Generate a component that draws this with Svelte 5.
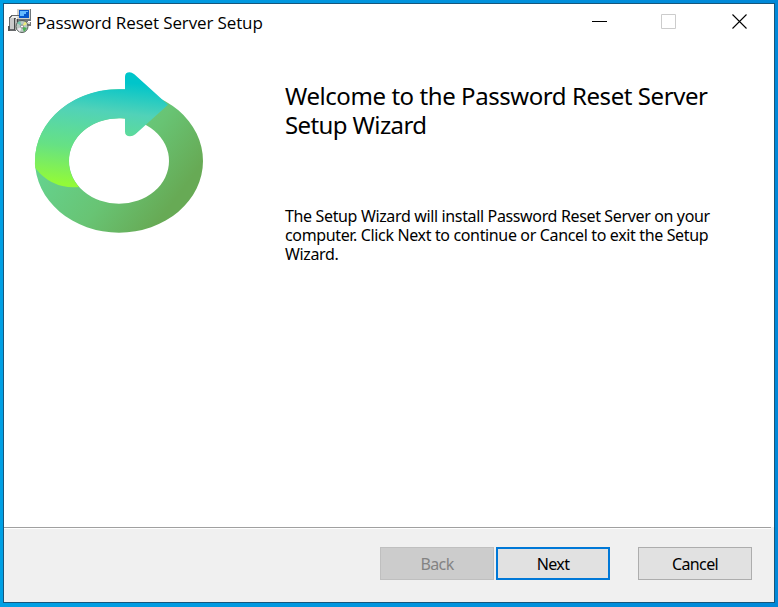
<script>
  let closed = $state(false);
</script>

<div class="desktop">
  <section class="window" aria-label="Password Reset Server Setup">
    <header>
      <svg class="app-icon" width="24" height="25" viewBox="0 0 24 25" shape-rendering="crispEdges">
        <path d="M9 0H23V12H9Z" fill="#6f777c" />
        <path d="M9 0H22V10H9Z" fill="#d5d2c8" />
        <path d="M11 1H21V9H11Z" fill="#0757cd" />
        <path d="M12 2H20V3H18V5H16V7H12Z" fill="#65b9ff" />
        <path d="M13 11H20V13H23V17H12V13H13Z" fill="#747879" />
        <path d="M15 13H22V15H15Z" fill="#d9d9d6" />
        <path d="M1 8L4 6H11L8 9V22H1Z" fill="#66696b" />
        <path d="M2 9H6V20H2Z" fill="#c9caca" />
        <path d="M4 7H10L8 9H2Z" fill="#eeeeea" />
        <path d="M6 9H7V21H6ZM9 10H10V21H9Z" fill="#454849" />
        <path d="M7 10H9V21H7Z" fill="#b2b2b0" />
        <path d="M0 17H2V22H0Z" fill="#555" />
        <g shape-rendering="auto">
          <circle cx="14" cy="17.5" r="6" fill="#bcc9c3" stroke="#555f59" />
          <path d="M14 17.5L9 14L12 12Z" fill="#70c7b0" />
          <path d="M14 17.5L17 12.5L19 15Z" fill="#f0ef76" />
          <path d="M14 17.5L19 19L16 23Z" fill="#48b353" />
          <path d="M14 17.5L12 23L9 20Z" fill="#eee7ef" />
          <circle cx="14" cy="17.5" r="1.5" fill="#fff" stroke="#666" stroke-width=".7" />
        </g>
      </svg>
      <span class="title">Password Reset Server Setup</span>
      <svg class="controls" width="160" height="18" viewBox="0 0 160 18" fill="none">
        <path d="M0 8.5H15" stroke="#000" />
        <path d="M69.500 1.500H83.500V15.500H69.500Z" stroke="#ccc" />
        <path d="M140.500 1.500L154.500 15.500M154.500 1.500L140.500 15.500" stroke="#000" stroke-width="1.1" />
      </svg>
    </header>
    <main>
      <svg class="logo" width="190" height="180" viewBox="0 0 570 540">
        <defs>
          <linearGradient id="ring" gradientUnits="userSpaceOnUse" x1="50" y1="330" x2="345" y2="551">
            <stop stop-color="#65d28d" /><stop offset=".53" stop-color="#68c474" /><stop offset="1" stop-color="#67aa55" />
          </linearGradient>
          <linearGradient id="arrow" gradientUnits="userSpaceOnUse" x1="260" y1="50" x2="225" y2="370">
            <stop stop-color="#00c5ca" /><stop offset=".29" stop-color="#51d2b8" /><stop offset=".65" stop-color="#66e184" /><stop offset="1" stop-color="#92fa39" />
          </linearGradient>
        </defs>
        <path fill="url(#ring)" fill-rule="evenodd" d="M33 291A252 215 0 1 0 537 291A252 215 0 1 0 33 291ZM135 291A150 128.500 0 1 1 435 291A150 128.500 0 1 1 135 291Z" />
        <path fill="url(#arrow)" d="M303 76V38Q303 25 317 25Q323 25 331 31L432 122L334 211Q327 217 318 217Q303 216 303 203V163Q294 162 285 162.500A150 128.500 0 0 0 165 369Q83 376 34 312Q32 298 33 291A252 215 0 0 1 303 76Z" />
      </svg>
      <div class="copy">
        <h1><span>Welcome to the Password Reset Server</span><span class="short">Setup Wizard</span></h1>
        <p><span>The Setup Wizard will install Password Reset Server on your</span><span>computer. Click Next to continue or Cancel to exit the Setup</span><span>Wizard.</span></p>
      </div>
    </main>
    <footer>
      <button disabled>Back</button>
      <button class="next">Next</button>
      <button class="cancel" onclick={() => (closed = true)}>Cancel</button>
    </footer>
  </section>
</div>

<style>
  :global(body) { margin: 0; overflow: hidden; }
  .desktop {
    box-sizing: border-box; width: 778px; height: 607px; padding: 3px 3px 4px;
    background: linear-gradient(90deg, #00a0e4, #0088d8); color: #000;
    font-family: "Open Sans", "Noto Sans", sans-serif;
  }
  .window {
    box-sizing: border-box; width: 772px; height: 600px; border: 1px solid #17567b;
    display: flex; flex-direction: column; background: #fff;
  }
  header { height: 42px; display: flex; align-items: flex-start; flex: none; }
  .app-icon { margin: 5px 0 0 4px; flex: none; }
  .title { margin: 4px 0 0 4px; font-size: 17px; line-height: 30px; white-space: nowrap; letter-spacing: -.13px; }
  .controls { margin: 9px 22px 0 auto; }
  main { flex: 1; display: flex; align-items: flex-start; }
  .logo { margin: 18px 0 0 20px; flex: none; }
  .copy { margin: 35px 0 0 71px; white-space: nowrap; font-family: "Noto Sans", sans-serif; }
  h1 span, p span { display: block; }
  h1 { margin: 0; font-size: 24px; line-height: 29px; font-weight: 400; letter-spacing: -.43px; }
  h1 .short { letter-spacing: -.6px; }
  p { margin: 68px 0 0; font-size: 16px; line-height: 19px; letter-spacing: -.355px; }
  footer {
    position: relative; box-sizing: border-box; height: 75px; padding: 20px 22px 0 0;
    display: flex; justify-content: flex-end; align-items: flex-start; background: #f0f0f0;
  }
  footer::before {
    content: ""; position: absolute; top: 0; left: 0; right: 3px; height: 1px;
    background: #a0a0a0; border-bottom: 1px solid #fff;
  }
  button {
    box-sizing: border-box; width: 114px; height: 33px; padding: 2px 0 0; border: 1px solid #adadad;
    border-radius: 0; background: #e1e1e1; color: #000;
    font: 16px/29px "Noto Sans", sans-serif; letter-spacing: -.6px;
  }
  button:disabled { background: #ccc; border-color: #bfbfbf; color: #838383; }
  .next { margin-left: 2px; border: 2px solid #0078d7; line-height: 27px; }
  .cancel { margin-left: 28px; }
</style>
